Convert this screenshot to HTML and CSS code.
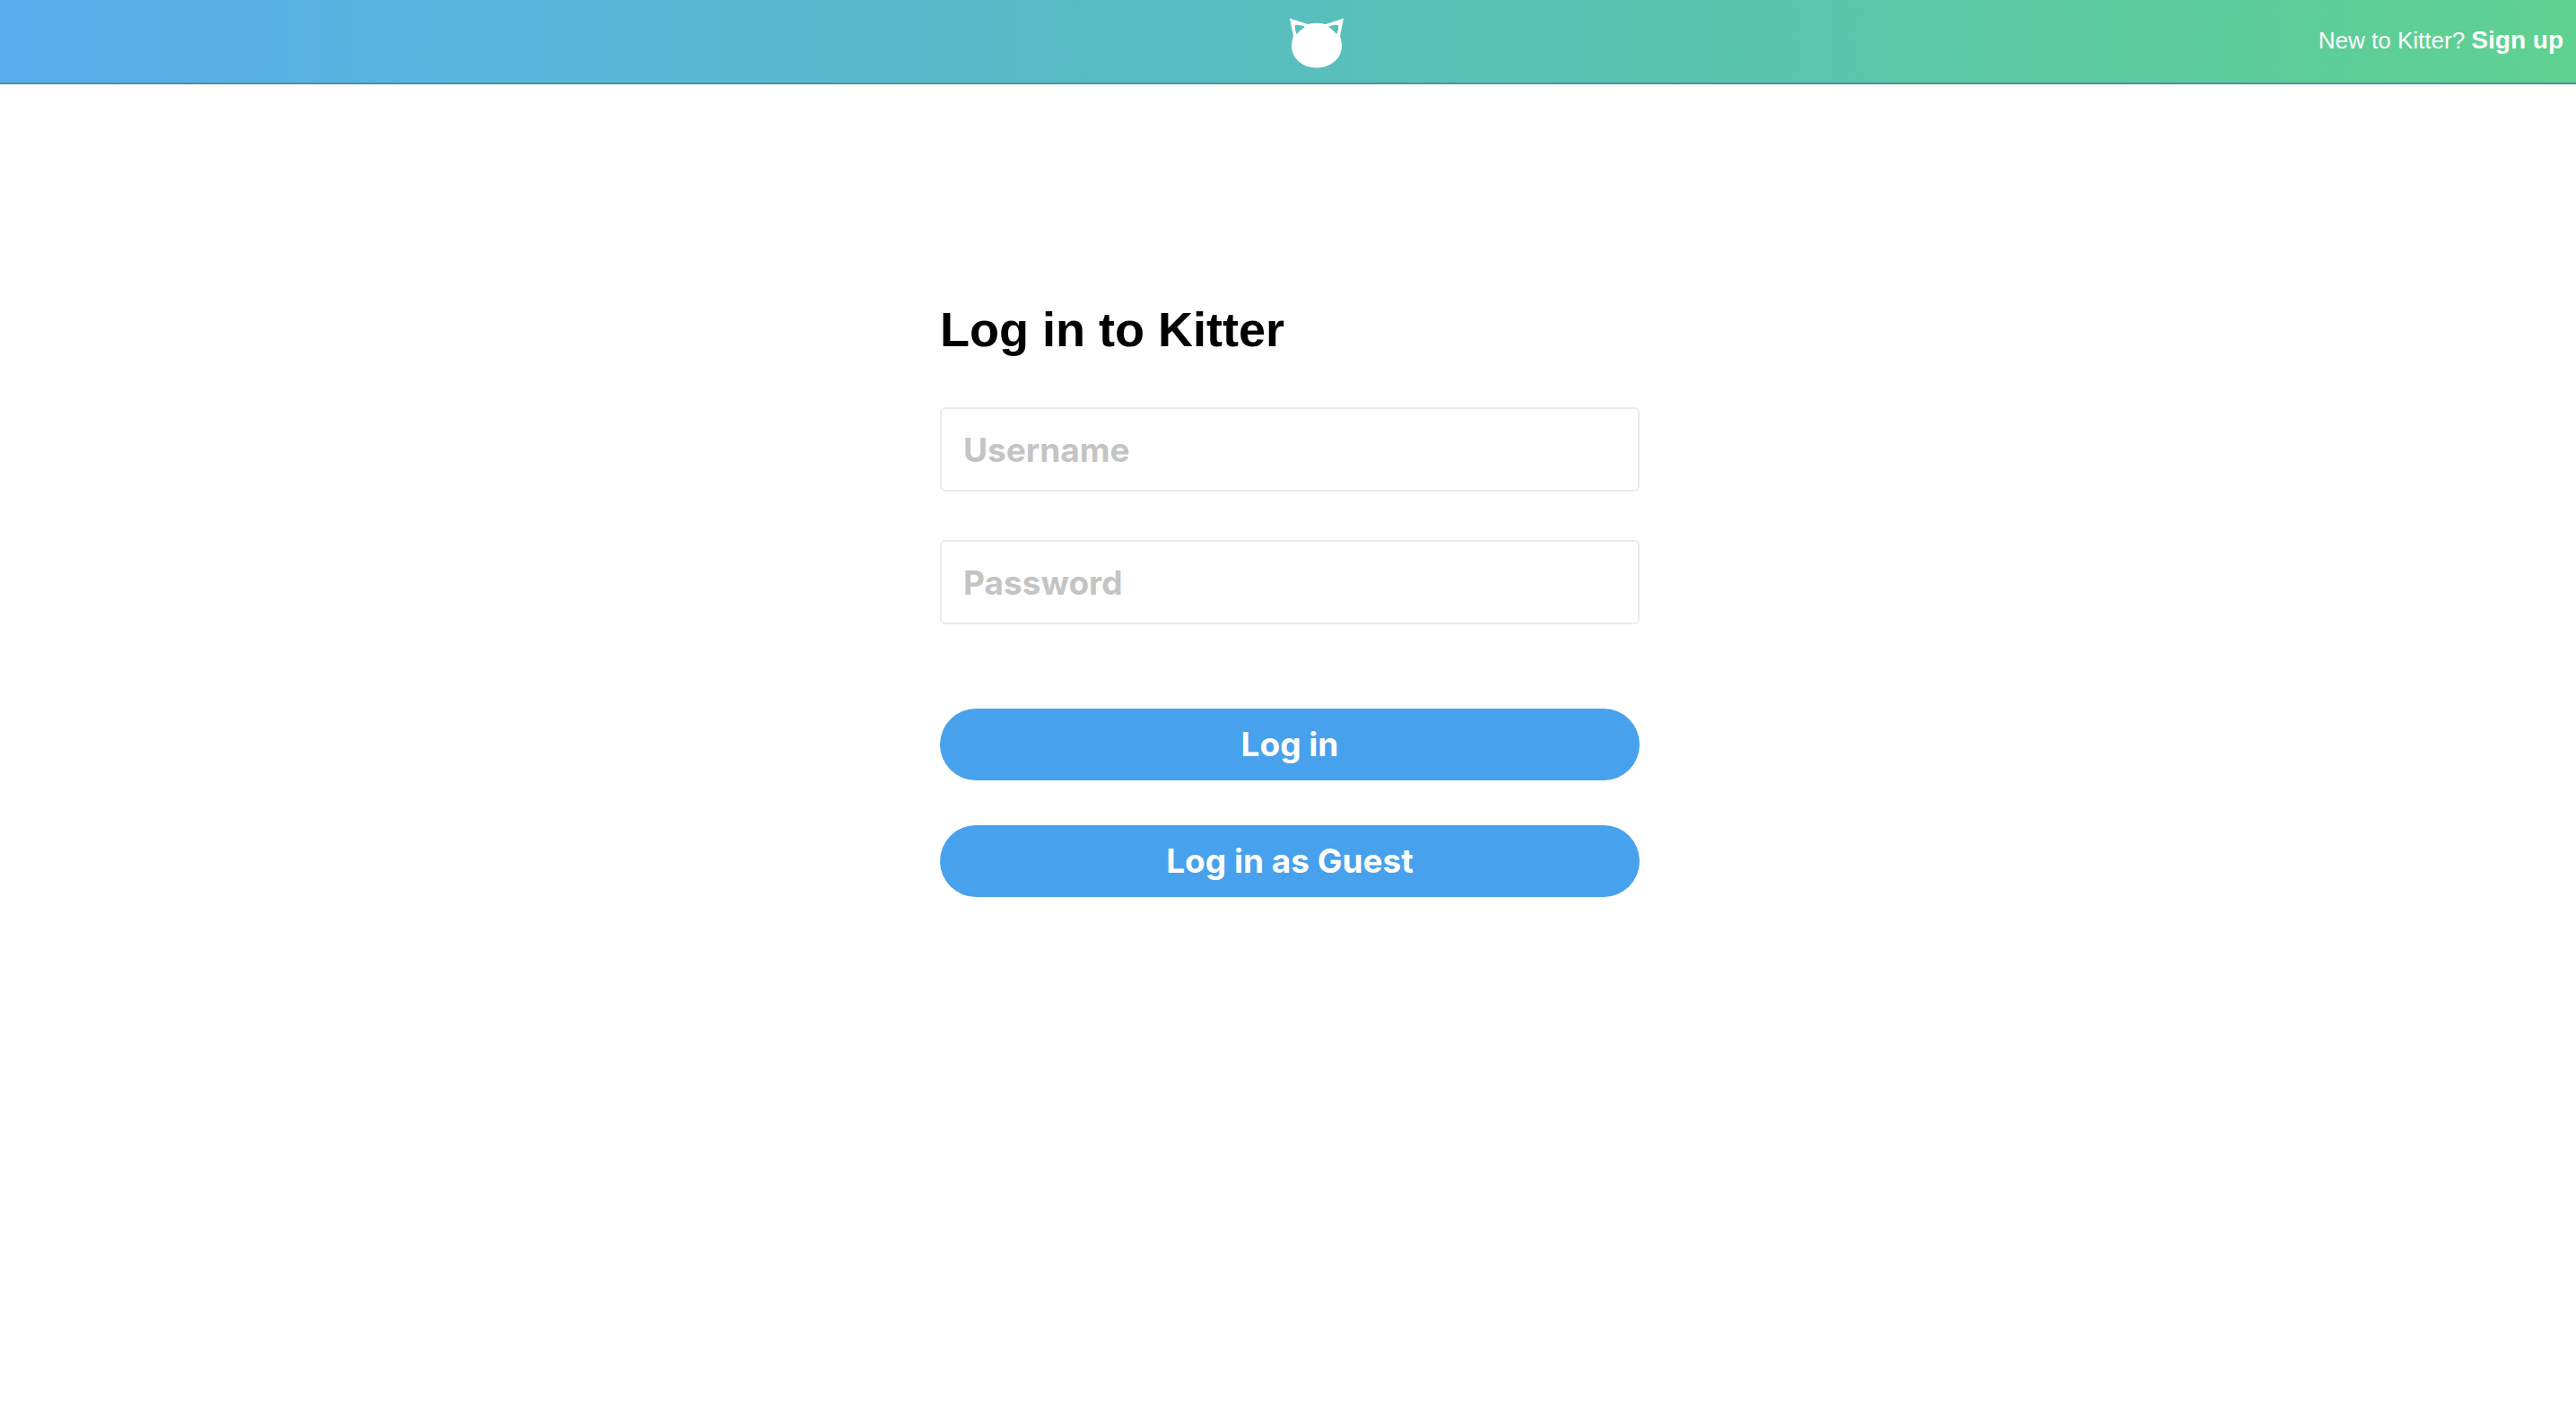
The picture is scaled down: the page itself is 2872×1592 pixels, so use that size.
FILE: index.html
```html
<!DOCTYPE html>
<html lang="en">
<head>
<meta charset="utf-8">
<meta name="viewport" content="width=device-width, initial-scale=1">
<title>Log in to Kitter</title>
<link rel="stylesheet" href="styles.css">
</head>
<body>
<header class="topbar">
  <a class="logo" href="#" aria-label="Kitter home">
    <svg viewBox="0 0 60 56" width="60" height="56" aria-hidden="true">
      <path fill="#fff" fill-rule="evenodd" d="M0 0.5 L20 7 Q30 4.5 40 7 L60 0.5 L56 20 Q58 26 58 31 C58 45 46 55.500 30 55.500 C14 55.500 2 45 2 31 Q2 25 4 20 Z M6 8 Q5 13 8 18 Q12 13 17 10 Q11 7 6 8 Z M54 8 Q55 13 52 18 Q48 13 43 10 Q49 7 54 8 Z"/>
    </svg>
  </a>
  <p class="signup">New to Kitter? <a class="signup-link" href="#">Sign up</a></p>
</header>
<main class="page">
  <form class="login">
    <h1 class="title">Log in to Kitter</h1>
    <input class="field" type="text" name="username" placeholder="Username" aria-label="Username">
    <input class="field" type="password" name="password" placeholder="Password" aria-label="Password">
    <div class="actions">
      <button class="button" type="button">Log in</button>
      <button class="button" type="button">Log in as Guest</button>
    </div>
  </form>
</main>
</body>
</html>
```
FILE: styles.css
```css
* {
  box-sizing: border-box;
}

body {
  margin: 0;
  background: #fff;
  color: #000;
  font-family: "Liberation Sans", Arial, sans-serif;
}

.topbar {
  display: grid;
  grid-template-columns: 1fr auto 1fr;
  align-items: center;
  height: 94px;
  padding: 0 14px 0 78px;
  border-bottom: 2px solid #45949f;
  background: linear-gradient(90deg, #5aaced, #58bfbd 50%, #5fd190) border-box;
}

.logo {
  display: block;
  grid-column: 2;
  padding-top: 4px;
}

.logo svg {
  display: block;
}

.signup {
  margin: 0;
  padding-bottom: 2px;
  color: #fff;
  font-size: 26px;
  line-height: 32px;
  text-align: right;
}

.signup-link {
  color: inherit;
  font-size: 28px;
  font-weight: 700;
  text-decoration: none;
}

.page {
  padding: 240px 0 0 4px;
}

.login {
  display: flex;
  flex-direction: column;
  gap: 54px;
  width: 100%;
  max-width: 780px;
  margin: 0 auto;
}

.title {
  margin: 0;
  font-size: 54px;
  line-height: 66px;
  font-weight: 700;
}

.field {
  width: 100%;
  height: 94px;
  padding: 0 24px;
  border: 2px solid #e6ecf0;
  border-radius: 6px;
  background: #fff;
  color: #000;
  font: 700 37px Inter, sans-serif;
}

.field::placeholder {
  color: #c4c4c4;
  opacity: 1;
}

.actions {
  display: flex;
  flex-direction: column;
  gap: 50px;
  padding-top: 40px;
}

.button {
  height: 80px;
  padding: 0 0 2px;
  border: 0;
  border-radius: 40px;
  background: #48a1ec;
  color: #fff;
  font: 700 37px Inter, sans-serif;
}
```
